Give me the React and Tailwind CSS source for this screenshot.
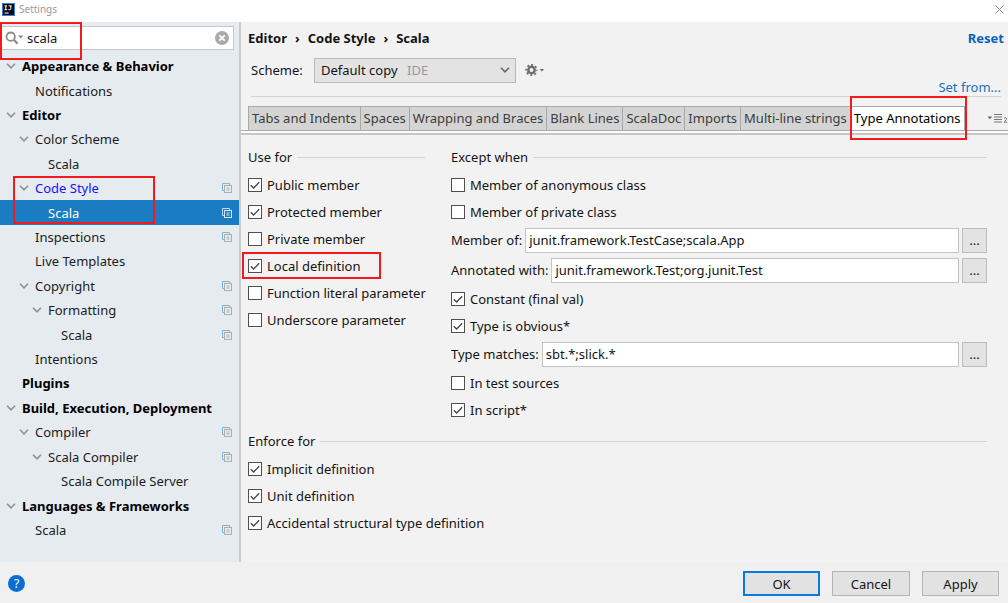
import { useState } from "react";

const TREE = [
  { label: "Appearance & Behavior", level: 0, open: true, bold: true },
  { label: "Notifications", level: 1 },
  { label: "Editor", level: 0, open: true, bold: true },
  { label: "Color Scheme", level: 1, open: true },
  { label: "Scala", level: 2 },
  { label: "Code Style", level: 1, open: true, copy: true, modified: true, marked: true },
  { label: "Scala", level: 2, copy: true, selected: true },
  { label: "Inspections", level: 1, copy: true },
  { label: "Live Templates", level: 1 },
  { label: "Copyright", level: 1, open: true, copy: true },
  { label: "Formatting", level: 2, open: true, copy: true },
  { label: "Scala", level: 3, copy: true },
  { label: "Intentions", level: 1 },
  { label: "Plugins", level: 0, bold: true },
  { label: "Build, Execution, Deployment", level: 0, open: true, bold: true },
  { label: "Compiler", level: 1, open: true, copy: true },
  { label: "Scala Compiler", level: 2, open: true, copy: true },
  { label: "Scala Compile Server", level: 3 },
  { label: "Languages & Frameworks", level: 0, open: true, bold: true },
  { label: "Scala", level: 1, copy: true },
];

const INDENT = ["pl-0", "pl-[13px]", "pl-[26px]", "pl-[39px]"];

const TABS = [
  "Tabs and Indents",
  "Spaces",
  "Wrapping and Braces",
  "Blank Lines",
  "ScalaDoc",
  "Imports",
  "Multi-line strings",
  "Type Annotations",
];

function Chevron({ className }) {
  return (
    <svg className={className} width="10" height="6" viewBox="0 0 10 6" fill="none" stroke="currentColor" strokeWidth="1.6" aria-hidden="true">
      <path d="M1 0.8 5 4.8 9 0.8" />
    </svg>
  );
}

function CopyIcon({ selected }) {
  const back = selected ? "#b9dcf5" : "#7fb2d3";
  const front = selected ? "#d5eafa" : "#a9afb4";
  return (
    <svg width="10" height="10" viewBox="0 0 10 10" fill="none" aria-hidden="true">
      <path d="M2.5 7.5h-2v-7h7v2" stroke={back} />
      <rect x="2.5" y="2.5" width="7" height="7" stroke={front} />
      <path d="M4.5 5h3M4.5 7h3" stroke={front} />
    </svg>
  );
}

function Highlight({ className }) {
  return <span className={"pointer-events-none absolute z-10 border-2 border-[#f5181c] " + className} />;
}

function TreeRow({ item }) {
  const tone = item.selected ? "text-white" : item.modified ? "text-[#1414ff]" : "text-[#1c1c1c]";
  return (
    <li className={"relative flex flex-1 " + (item.selected ? "bg-[#1a7dc4]" : "")}>
      {item.marked && <Highlight className="top-0 left-[13px] h-[48px] w-[142px]" />}
      <button type="button" className={"flex flex-1 items-center pr-[7px] text-left whitespace-nowrap " + INDENT[item.level]}>
        <span className="flex w-[22px] shrink-0 justify-center text-[#8e9296]">{item.open && <Chevron />}</span>
        <span className={"flex-1 " + tone + (item.bold ? " font-bold text-black" : "")}>{item.label}</span>
        {item.copy && <CopyIcon selected={item.selected} />}
      </button>
    </li>
  );
}

function Check({ label, checked = false, marked }) {
  const [on, setOn] = useState(checked);
  return (
    <div className="relative flex h-[27px] items-center">
      {marked && <Highlight className="top-0 -left-[6px] h-[27px] w-[139px]" />}
      <label className="flex items-center gap-[5px] whitespace-nowrap">
        <span className="relative flex size-[14px]">
          <input
            type="checkbox"
            checked={on}
            onChange={(e) => setOn(e.target.checked)}
            className="size-[14px] appearance-none border border-[#4f4f4f] bg-white"
          />
          {on && (
            <svg className="pointer-events-none absolute inset-0" width="14" height="14" viewBox="0 0 14 14" fill="none" stroke="#444" strokeWidth="1.3" aria-hidden="true">
              <path d="M2.8 7.2 5.6 10 11.2 4.2" />
            </svg>
          )}
        </span>
        {label}
      </label>
    </div>
  );
}

function Field({ id, label, value }) {
  return (
    <div className="flex h-[30px] items-center">
      <label htmlFor={id} className="pr-[3px] whitespace-nowrap">{label}</label>
      <input id={id} defaultValue={value} className="h-[25px] min-w-0 flex-1 border border-[#c4c4c4] bg-white px-[3px]" />
      <button type="button" aria-label={"Edit " + label} className="ml-[3px] flex h-[25px] w-[25px] items-center justify-center border border-[#bcbcbc] bg-[#e3e3e3]">
        ...
      </button>
    </div>
  );
}

function Section({ title, children }) {
  return (
    <section>
      <h2 className="mb-1 flex h-5 items-center gap-[5px]">
        {title}
        <span className="h-px flex-1 bg-[#d4d4d4]" />
      </h2>
      {children}
    </section>
  );
}

function Sidebar() {
  return (
    <aside className="flex w-[241px] shrink-0 flex-col border-r-2 border-[#c8cacc] bg-[#e6ebf0] pb-5">
      <div className="relative mt-1 mr-[5px] flex h-[24px] items-center border border-[#c3c7ca] bg-white pr-1 pl-1">
        <Highlight className="-top-[5px] -left-px h-[38px] w-[82px]" />
        <svg width="19" height="14" viewBox="0 0 19 14" fill="none" aria-hidden="true">
          <circle cx="5.7" cy="5.7" r="4.2" stroke="#8b8b8b" strokeWidth="1.8" />
          <path d="M8.8 8.8 12.6 12.8" stroke="#8b8b8b" strokeWidth="2.2" />
          <path d="M13 4.5h5.4L15.7 7.5Z" fill="#8b8b8b" />
        </svg>
        <input aria-label="Search settings" defaultValue="scala" className="ml-[3px] min-w-0 flex-1 outline-none" />
        <button type="button" aria-label="Clear search">
          <svg width="14" height="14" viewBox="0 0 14 14" aria-hidden="true">
            <circle cx="7" cy="7" r="7" fill="#a9acae" />
            <path d="M4.3 4.3 9.7 9.7M9.7 4.3 4.3 9.7" stroke="#fff" strokeWidth="1.7" />
          </svg>
        </button>
      </div>
      <ul className="mt-1 flex flex-1 flex-col">
        {TREE.map((item, i) => (
          <TreeRow key={i} item={item} />
        ))}
      </ul>
    </aside>
  );
}

function TabBar() {
  return (
    <div className="mt-[9px] border-b-2 border-[#c6c6c6]">
      <div className="flex h-[25px] items-stretch border-b border-[#ababab]">
        <div role="tablist" className="ml-[7px] flex items-stretch border-l border-[#a8a8a8]">
          {TABS.map((tab) => {
            const active = tab === "Type Annotations";
            return (
              <button
                key={tab}
                type="button"
                role="tab"
                aria-selected={active}
                className={
                  "relative border-t border-r border-[#a8a8a8] px-[3px] pb-[2px] whitespace-nowrap " +
                  (active ? "bg-white text-black" : "bg-[#d4d4d4] text-[#3c3c3c]")
                }
              >
                {active && <Highlight className="-top-[11px] -right-[3px] -left-px h-[44px]" />}
                {tab}
              </button>
            );
          })}
        </div>
        <button type="button" aria-label="Show hidden tabs" className="ml-auto flex items-center">
          <svg width="21" height="12" viewBox="0 0 21 12" aria-hidden="true">
            <path d="M0.5 4.5h4.8L2.9 7.3Z" fill="#6a6a6a" />
            <path d="M7 2.5h8M7 5h8M7 7.5h8M7 10h8" stroke="#777" />
            <path d="M17 6.2q1.5-1.2 2.6 0q.4 1-2.4 4h3" fill="none" stroke="#777" />
          </svg>
        </button>
      </div>
      <div className="h-[2px] bg-[#fbfbfb]" />
    </div>
  );
}

function Main() {
  return (
    <main className="flex min-w-0 flex-1 flex-col bg-[#f2f2f2]">
      <div className="flex h-8 items-center justify-between pr-[4px] pl-[7px] font-bold">
        <nav aria-label="Breadcrumb" className="flex gap-2">
          <span>Editor</span>
          <span>›</span>
          <span>Code Style</span>
          <span>›</span>
          <span>Scala</span>
        </nav>
        <a href="#reset" className="text-[#0b63bd]">Reset</a>
      </div>
      <div className="flex h-8 items-center pl-[10px]">
        <label htmlFor="scheme" className="w-[63px]">Scheme:</label>
        <div className="relative flex w-[202px] items-center">
          <select id="scheme" className="h-[25px] w-full appearance-none border border-[#b9b9b9] bg-[#e3e3e3] pl-[6px]">
            <option>Default copy</option>
          </select>
          <span className="pointer-events-none absolute left-[93px] text-[#999]">IDE</span>
          <Chevron className="pointer-events-none absolute right-[6px] text-[#666]" />
        </div>
        <button type="button" aria-label="Scheme actions" className="ml-[9px]">
          <svg width="20" height="14" viewBox="0 0 20 14" fill="none" aria-hidden="true">
            <circle cx="6.5" cy="7" r="3.2" stroke="#6e6e6e" strokeWidth="2.4" />
            <circle cx="6.5" cy="7" r="5.2" stroke="#6e6e6e" strokeWidth="1.8" strokeDasharray="2 2.084" strokeDashoffset="1" />
            <path d="M14.5 6h4.6L16.8 8.5Z" fill="#6e6e6e" />
          </svg>
        </button>
      </div>
      <div className="mr-[7px] ml-[10px] flex h-[11px] items-end justify-end border-b border-[#d4d4d4]">
        <a href="#set-from" className="leading-[18px] text-[#1a70be]">Set from...</a>
      </div>
      <TabBar />
      <div className="flex flex-col gap-2 pt-[12px] pr-[21px] pb-6 pl-[7px]">
        <div className="grid grid-cols-[177px_1fr] gap-[26px]">
          <Section title="Use for">
            <Check label="Public member" checked />
            <Check label="Protected member" checked />
            <Check label="Private member" />
            <Check label="Local definition" checked marked />
            <Check label="Function literal parameter" />
            <Check label="Underscore parameter" />
          </Section>
          <Section title="Except when">
            <Check label="Member of anonymous class" />
            <Check label="Member of private class" />
            <Field id="member-of" label="Member of:" value="junit.framework.TestCase;scala.App" />
            <Field id="annotated-with" label="Annotated with:" value="junit.framework.Test;org.junit.Test" />
            <Check label="Constant (final val)" checked />
            <Check label="Type is obvious*" checked />
            <Field id="type-matches" label="Type matches:" value="sbt.*;slick.*" />
            <Check label="In test sources" />
            <Check label="In script*" checked />
          </Section>
        </div>
        <Section title="Enforce for">
          <Check label="Implicit definition" checked />
          <Check label="Unit definition" checked />
          <Check label="Accidental structural type definition" checked />
        </Section>
      </div>
    </main>
  );
}

export default function App() {
  return (
    <div className="flex min-h-screen flex-col bg-[#f0f0f0] font-['Noto_Sans','Open_Sans',sans-serif] text-[13px] leading-5 text-[#141414]">
      <header className="flex h-[22px] items-center bg-white pb-[4px] pl-[2px]">
        <svg width="13" height="13" viewBox="0 0 13 13" aria-hidden="true">
          <rect width="13" height="13" fill="#2f7fd6" />
          <rect x="1" y="1" width="11" height="11" fill="#0b0b14" />
          <path d="M2.5 2.9h2.6M3.8 2.9v3.8M2.5 6.7h2.6M6.6 2.9h3M8.8 2.9v2.8q0 1-1.1 1H6.4M2.6 10h4" fill="none" stroke="#fff" strokeWidth="1" />
        </svg>
        <h1 className="ml-[4px] flex-1 text-[10px] leading-4 text-[#999]">Settings</h1>
        <button type="button" aria-label="Close" className="mr-[4px]">
          <svg width="9" height="9" viewBox="0 0 9 9" stroke="#8c8c8c" aria-hidden="true">
            <path d="M0.5 0.5 8.5 8.5M8.5 0.5 0.5 8.5" />
          </svg>
        </button>
      </header>
      <div className="flex flex-1">
        <Sidebar />
        <Main />
      </div>
      <footer className="flex h-[41px] items-center gap-3 pt-[2px] pr-[9px] pl-2">
        <button type="button" aria-label="Help" className="mr-auto flex size-[17px] items-center justify-center rounded-full bg-[#0a6fd0] text-[12px] leading-none text-white">
          ?
        </button>
        <button type="button" className="h-[25px] w-[77px] border-2 border-[#0b7ade] bg-[#e2e2e2]">OK</button>
        <button type="button" className="h-[25px] w-[78px] border border-[#b5b5b5] bg-[#e2e2e2]">Cancel</button>
        <button type="button" className="h-[25px] w-[77px] border border-[#b5b5b5] bg-[#e2e2e2]">Apply</button>
      </footer>
    </div>
  );
}
